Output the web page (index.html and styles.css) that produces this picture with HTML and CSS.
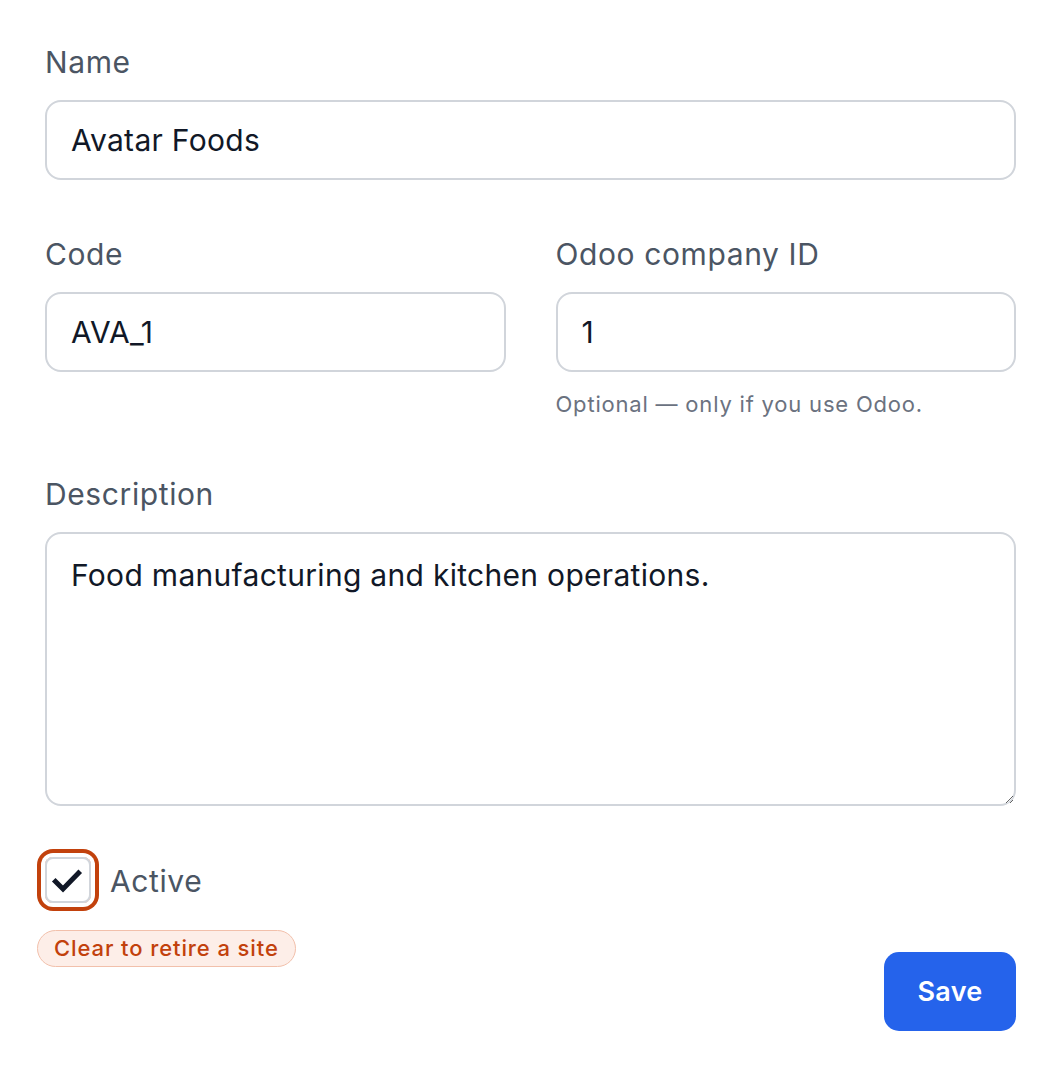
FILE: index.html
```html
<!DOCTYPE html>
<html lang="en">
<head>
<meta charset="utf-8">
<title>Edit site</title>
<link rel="stylesheet" href="styles.css">
</head>
<body>
<form class="form">
  <div class="field">
    <label class="label" for="name">Name</label>
    <input class="input" id="name" type="text" value="Avatar Foods">
  </div>
  <div class="row">
    <div class="field">
      <label class="label" for="code">Code</label>
      <input class="input" id="code" type="text" value="AVA_1">
    </div>
    <div class="field">
      <label class="label" for="odoo">Odoo company ID</label>
      <input class="input" id="odoo" type="text" value="1">
      <p class="help">Optional — only if you use Odoo.</p>
    </div>
  </div>
  <div class="field">
    <label class="label" for="desc">Description</label>
    <textarea class="input textarea" id="desc">Food manufacturing and kitchen operations.</textarea>
  </div>
  <div class="check-row">
    <span class="checkbox">
      <svg viewBox="0 0 42 42" width="42" height="42" aria-hidden="true"><path d="M8.5 22.5 L16 30 L31.5 14" fill="none" stroke="#111827" stroke-width="5" stroke-linecap="square"/></svg>
    </span>
    <span class="check-label">Active</span>
  </div>
  <div class="actions">
    <span class="badge">Clear to retire a site</span>
    <button class="btn" type="button">Save</button>
  </div>
</form>
</body>
</html>
```

FILE: styles.css
```css
* { box-sizing: border-box; }
html, body { margin: 0; background: #fff; }
body {
  font-family: Inter, "Noto Sans", "Liberation Sans", sans-serif;
  padding: 42px 36px 0 45px;
}
.form { display: flex; flex-direction: column; gap: 54px; }
.field { display: flex; flex-direction: column; min-width: 0; }
.row { display: grid; grid-template-columns: 1fr 1fr; gap: 50px; }
.label {
  font-size: 30px;
  line-height: 40px;
  color: #4b5563;
  letter-spacing: 0.6px;
  margin-bottom: 18px;
}
.input {
  font-family: inherit;
  font-size: 30px;
  letter-spacing: 0.3px;
  color: #111827;
  height: 80px;
  border: 2px solid #d1d5db;
  border-radius: 16px;
  padding: 0 24px;
  background: #fff;
  outline: none;
  width: 100%;
}
.textarea {
  height: 274px;
  padding: 19px 24px;
  line-height: 44px;
  resize: vertical;
}
.help {
  margin: 16px 0 0;
  font-size: 22px;
  line-height: 32px;
  color: #6b7280;
  letter-spacing: 0.8px;
}
.check-row {
  display: flex;
  align-items: center;
  gap: 19px;
  margin-top: -3px;
}
.checkbox {
  width: 46px; height: 46px;
  border: 2px solid #d1d5db;
  border-radius: 8px;
  display: flex; align-items: center; justify-content: center;
  box-shadow: 0 0 0 4px #fff, 0 0 0 8px #c2410c;
  flex: none;
}
.checkbox svg { display: block; }
.check-label { font-size: 30px; line-height: 40px; color: #4b5563; letter-spacing: 0.6px; padding-top: 2px; }
.actions {
  display: flex;
  justify-content: space-between;
  align-items: flex-start;
  margin-top: -27px;
  margin-left: -8px;
}
.badge {
  font-size: 22px;
  line-height: 35px;
  color: #c2410c;
  background: #fdeee8;
  border: 1.5px solid #f2c0ab;
  border-radius: 999px;
  padding: 0 16px;
  font-weight: 500;
  letter-spacing: 0.9px;
}
.btn {
  margin-top: 22px;
  font-family: inherit;
  font-size: 27px;
  font-weight: 600;
  letter-spacing: 0.3px;
  color: #fff;
  background: #2563eb;
  border: none;
  border-radius: 15px;
  width: 132px;
  height: 79px;
}
```
